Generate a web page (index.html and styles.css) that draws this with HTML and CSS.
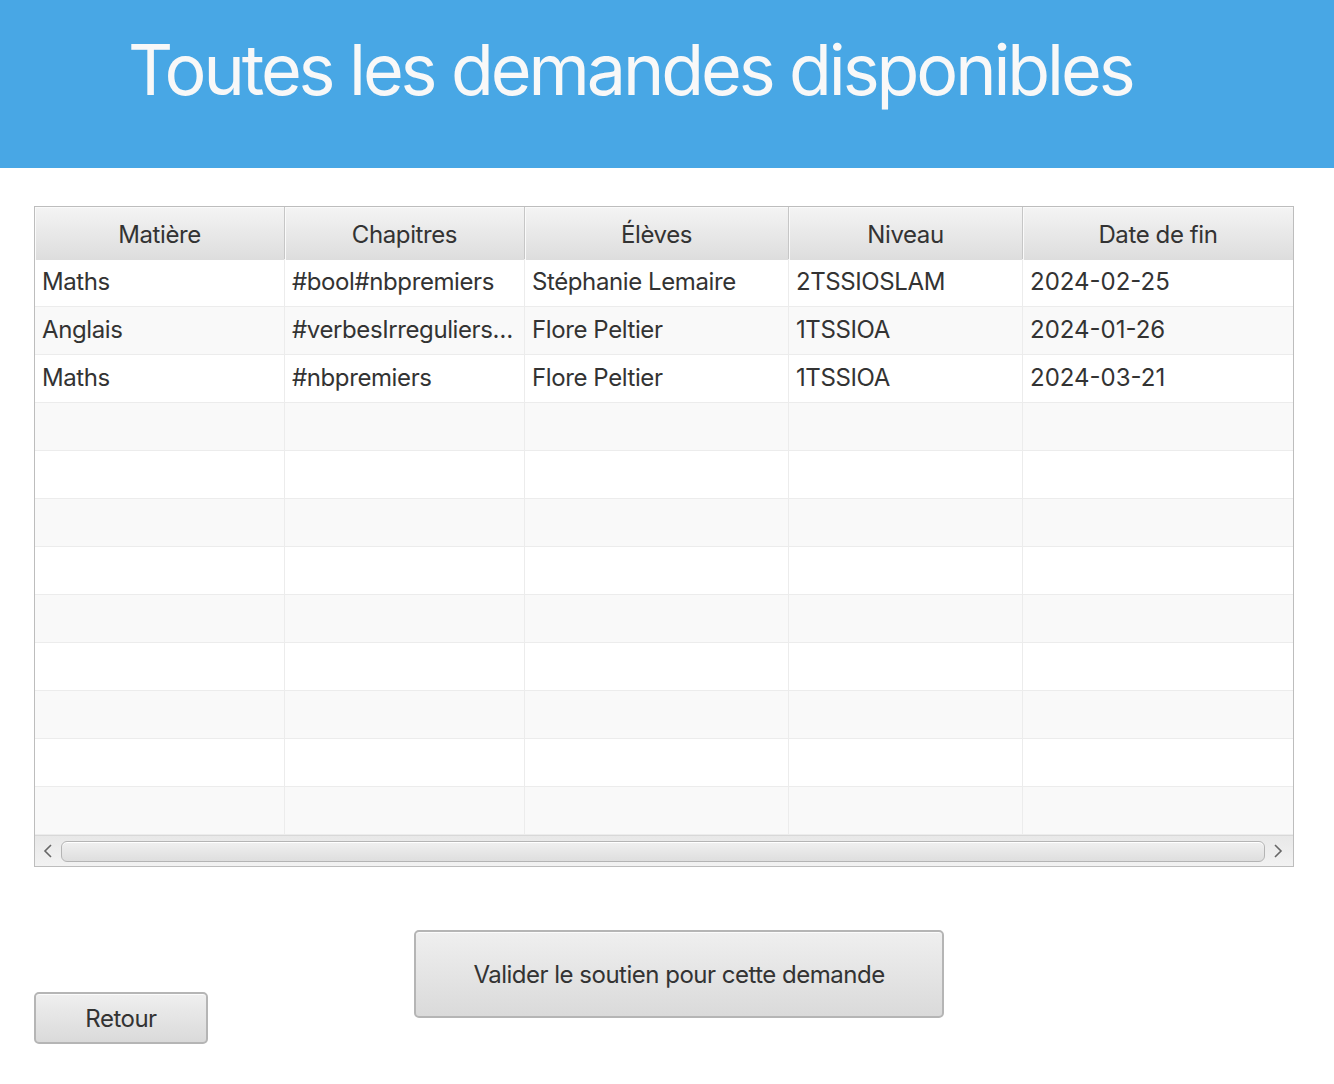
FILE: index.html
```html
<!DOCTYPE html>
<html lang="fr">
<head>
<meta charset="utf-8">
<title>Toutes les demandes disponibles</title>
<link rel="stylesheet" href="styles.css">
</head>
<body>
<header class="banner">
  <h1 class="title">Toutes les demandes disponibles</h1>
</header>
<main class="content">
  <div class="table">
    <div class="thead">
      <div class="th c1">Matière</div>
      <div class="th c2">Chapitres</div>
      <div class="th c3">Élèves</div>
      <div class="th c4">Niveau</div>
      <div class="th c5">Date de fin</div>
    </div>
    <div class="tbody">
      <div class="tr"><div class="td">Maths</div><div class="td">#bool#nbpremiers</div><div class="td">Stéphanie Lemaire</div><div class="td">2TSSIOSLAM</div><div class="td num">2024-02-25</div></div>
      <div class="tr odd"><div class="td">Anglais</div><div class="td">#verbesIrreguliers…</div><div class="td">Flore Peltier</div><div class="td">1TSSIOA</div><div class="td num">2024-01-26</div></div>
      <div class="tr"><div class="td">Maths</div><div class="td">#nbpremiers</div><div class="td">Flore Peltier</div><div class="td">1TSSIOA</div><div class="td num">2024-03-21</div></div>
      <div class="tr odd"><div class="td"></div><div class="td"></div><div class="td"></div><div class="td"></div><div class="td"></div></div>
      <div class="tr"><div class="td"></div><div class="td"></div><div class="td"></div><div class="td"></div><div class="td"></div></div>
      <div class="tr odd"><div class="td"></div><div class="td"></div><div class="td"></div><div class="td"></div><div class="td"></div></div>
      <div class="tr"><div class="td"></div><div class="td"></div><div class="td"></div><div class="td"></div><div class="td"></div></div>
      <div class="tr odd"><div class="td"></div><div class="td"></div><div class="td"></div><div class="td"></div><div class="td"></div></div>
      <div class="tr"><div class="td"></div><div class="td"></div><div class="td"></div><div class="td"></div><div class="td"></div></div>
      <div class="tr odd"><div class="td"></div><div class="td"></div><div class="td"></div><div class="td"></div><div class="td"></div></div>
      <div class="tr"><div class="td"></div><div class="td"></div><div class="td"></div><div class="td"></div><div class="td"></div></div>
      <div class="tr odd"><div class="td"></div><div class="td"></div><div class="td"></div><div class="td"></div><div class="td"></div></div>
    </div>
    <div class="hscroll">
      <span class="arrow">
        <svg width="12" height="16" viewBox="0 0 12 16"><path d="M9 2 L3 8 L9 14" fill="none" stroke="#666" stroke-width="1.6"/></svg>
      </span>
      <div class="thumb"></div>
      <span class="arrow">
        <svg width="12" height="16" viewBox="0 0 12 16"><path d="M3 2 L9 8 L3 14" fill="none" stroke="#666" stroke-width="1.6"/></svg>
      </span>
    </div>
  </div>
  <div class="actions">
    <button class="btn btn-back" type="button">Retour</button>
    <button class="btn btn-validate" type="button">Valider le soutien pour cette demande</button>
  </div>
</main>
</body>
</html>
```
FILE: styles.css
```css
* { box-sizing: border-box; }
html, body { margin: 0; padding: 0; background: #ffffff; }
body {
  font-family: Inter, "Noto Sans", "Liberation Sans", sans-serif;
  color: #333333;
  width: 1334px;
  height: 1084px;
  overflow: hidden;
  letter-spacing: -0.4px;
}
.banner {
  height: 168px;
  background: #48a7e5;
  padding-left: 128px;
  display: flex;
  align-items: flex-start;
}
.title {
  margin: 0;
  padding-top: 25px;
  font-weight: 400;
  font-size: 70px;
  line-height: 90px;
  color: #f8f8f8;
  letter-spacing: -3.1px;
}
.content {
  padding: 38px 40px 0 34px;
}
.table {
  width: 1260px;
  border: 1px solid #bdbdbd;
  background: #fff;
}
.thead, .tr {
  display: grid;
  grid-template-columns: 250px 240px 264px 234px 1fr;
}
.thead {
  height: 52px;
  border-bottom: 1px solid #c8c8c8;
}
.th {
  background: linear-gradient(#f4f4f4, #dddddd);
  border-right: 1px solid #c6c6c6;
  box-shadow: inset 1px 1px 0 #fafafa;
  font-size: 24px;
  line-height: 51px;
  padding-top: 2px;
  text-align: center;
  color: #333;
}
.th.c5 { border-right: none; }
.tr {
  height: 48px;
  background: #ffffff;
  border-bottom: 1px solid #ececec;
}
.tr.odd { background: #f9f9f9; }
.td {
  border-right: 1px solid #ececec;
  font-size: 24px;
  line-height: 46px;
  padding-left: 7px;
  white-space: nowrap;
  overflow: hidden;
  color: #333;
}
.td.num { letter-spacing: 0; }
.td:last-child { border-right: none; }
.hscroll {
  height: 31px;
  background: linear-gradient(#e8e8e8, #f2f2f2);
  border-top: 1px solid #d8d8d8;
  display: flex;
  align-items: center;
  padding: 0 6px 0 4px;
  gap: 4px;
}
.arrow {
  width: 18px;
  display: flex;
  justify-content: center;
}
.thumb {
  flex: 1;
  height: 21px;
  border: 1px solid #b4b4b4;
  border-radius: 6px;
  background: linear-gradient(#f0f0f0, #dedede);
  box-shadow: inset 0 1px 0 #ffffff;
}
.actions {
  display: flex;
  align-items: flex-start;
}
.btn {
  font-family: Inter, "Noto Sans", "Liberation Sans", sans-serif;
  font-size: 24px;
  letter-spacing: -0.5px;
  color: #333;
  border: 2px solid #b5b5b5;
  border-radius: 5px;
  background: linear-gradient(#efefef, #dadada);
  box-shadow: inset 0 1px 0 #fbfbfb;
  padding: 0;
}
.btn-back {
  width: 174px;
  height: 52px;
  margin-top: 125px;
}
.btn-validate {
  width: 530px;
  height: 88px;
  margin-top: 63px;
  margin-left: 206px;
}
```
